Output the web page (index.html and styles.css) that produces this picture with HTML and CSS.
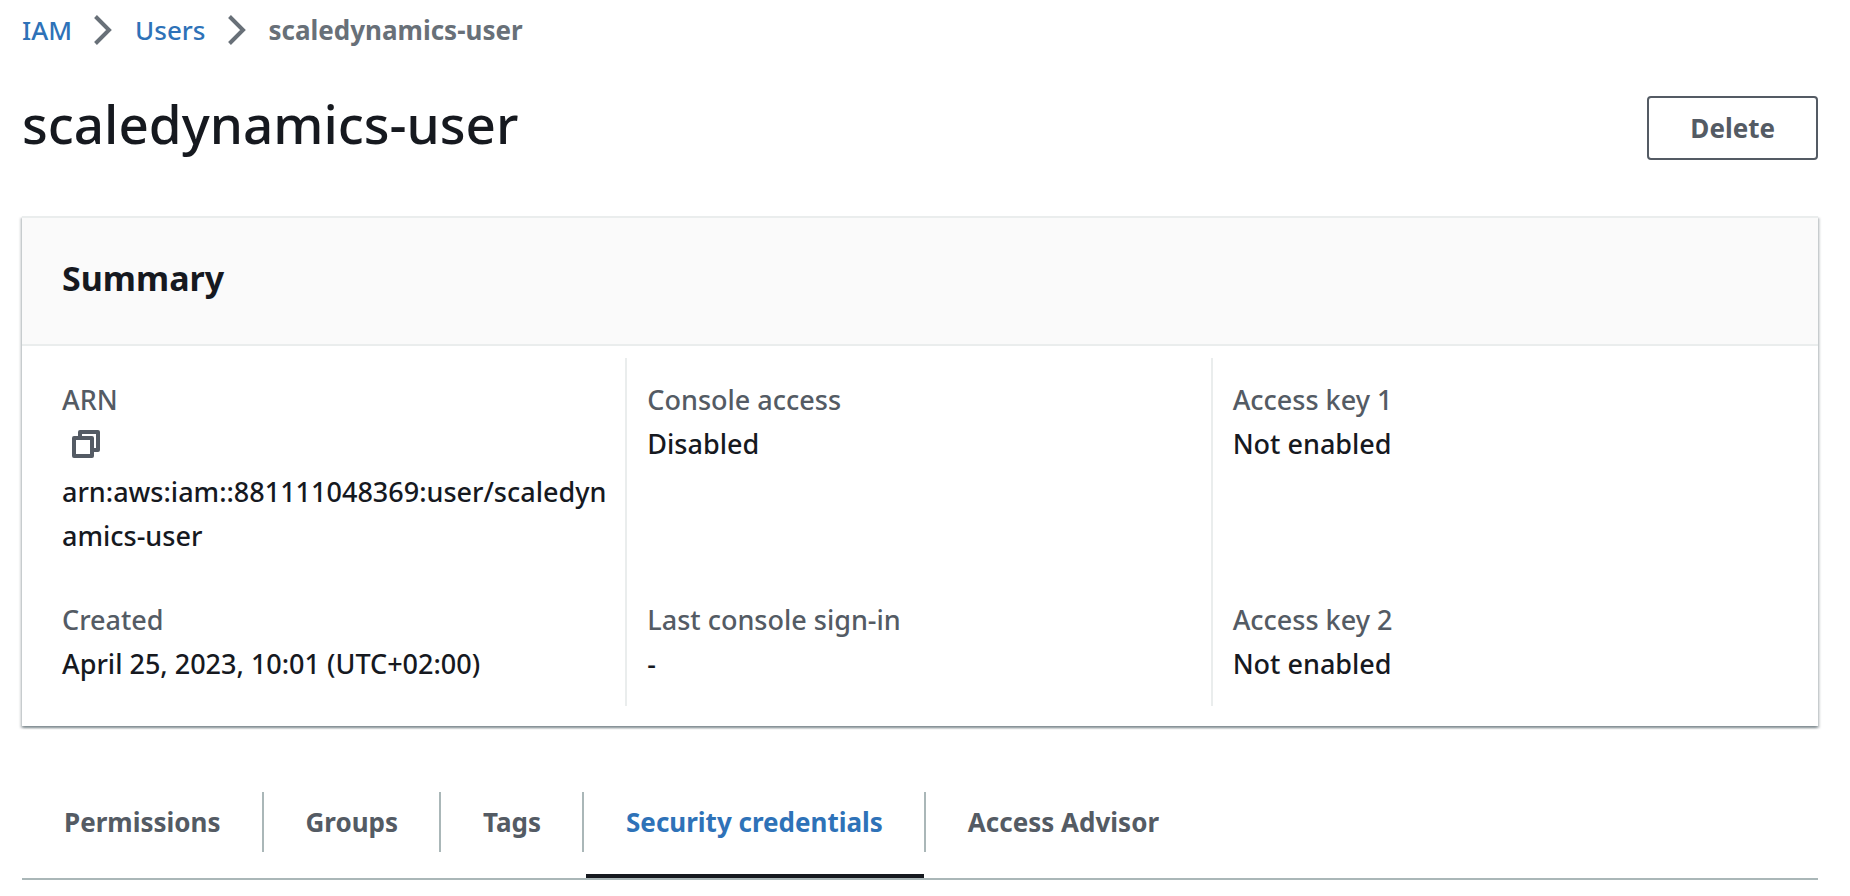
FILE: index.html
```
<!DOCTYPE html>
<html lang="en">
<head>
<meta charset="utf-8">
<meta name="viewport" content="width=device-width, initial-scale=1">
<title>scaledynamics-user | IAM</title>
<link rel="stylesheet" href="styles.css">
</head>
<body>
<main class="page">
  <nav class="breadcrumbs" aria-label="Breadcrumbs">
    <a class="crumb-link" href="#iam">IAM</a>
    <svg class="chevron" viewBox="0 0 19 30" aria-hidden="true"><path d="M1.5 1.5L15 15L1.5 28.5"/></svg>
    <a class="crumb-link" href="#users">Users</a>
    <svg class="chevron" viewBox="0 0 19 30" aria-hidden="true"><path d="M1.5 1.5L15 15L1.5 28.5"/></svg>
    <span class="crumb-current" aria-current="page">scaledynamics-user</span>
  </nav>

  <header class="title-row">
    <h1 class="title">scaledynamics-user</h1>
    <button class="button" type="button">Delete</button>
  </header>

  <section class="card" aria-labelledby="summary">
    <div class="card-header">
      <h2 class="card-title" id="summary">Summary</h2>
    </div>
    <div class="card-body">
      <dl class="column">
        <div class="field">
          <dt class="label">ARN</dt>
          <dd class="value value-long">
            <button class="copy" type="button" aria-label="Copy ARN">
              <svg class="copy-icon" viewBox="0 0 28 28" aria-hidden="true"><path d="M8 6V2H26V20H22"/><rect x="2" y="8" width="18" height="18"/></svg>
            </button>
            <span>arn:aws:iam::881111048369:user/scaledynamics-user</span>
          </dd>
        </div>
        <div class="field">
          <dt class="label">Created</dt>
          <dd class="value">April 25, 2023, 10:01 (UTC+02:00)</dd>
        </div>
      </dl>
      <dl class="column column-divided">
        <div class="field">
          <dt class="label">Console access</dt>
          <dd class="value">Disabled</dd>
        </div>
        <div class="field">
          <dt class="label">Last console sign-in</dt>
          <dd class="value">-</dd>
        </div>
      </dl>
      <dl class="column column-divided">
        <div class="field">
          <dt class="label">Access key 1</dt>
          <dd class="value">Not enabled</dd>
        </div>
        <div class="field">
          <dt class="label">Access key 2</dt>
          <dd class="value">Not enabled</dd>
        </div>
      </dl>
    </div>
  </section>

  <div class="tabs" role="tablist">
    <button class="tab" type="button" role="tab" aria-selected="false"><span class="tab-label">Permissions</span></button>
    <button class="tab" type="button" role="tab" aria-selected="false"><span class="tab-label">Groups</span></button>
    <button class="tab" type="button" role="tab" aria-selected="false"><span class="tab-label">Tags</span></button>
    <button class="tab tab-active" type="button" role="tab" aria-selected="true"><span class="tab-label">Security credentials</span></button>
    <button class="tab" type="button" role="tab" aria-selected="false"><span class="tab-label">Access Advisor</span></button>
  </div>
</main>
</body>
</html>
```
FILE: styles.css
```
:root {
  --text: #16191f;
  --label: #545b64;
  --muted: #687078;
  --link: #2e72b8;
  --line: #eaeded;
  --line-strong: #aab7b8;
}

* {
  box-sizing: border-box;
}

body {
  margin: 0;
  background: #fff;
  color: var(--text);
  font: 500 27px/44px "Noto Sans", "Open Sans", sans-serif;
}

button {
  margin: 0;
  border: 0;
  background: none;
  font: inherit;
  color: inherit;
  cursor: pointer;
}

.page {
  padding: 8px 32px 16px 22px;
}

/* Breadcrumbs */
.breadcrumbs {
  display: flex;
  align-items: center;
  gap: 22px;
  font-size: 26px;
}

.crumb-link {
  color: var(--link);
  text-decoration: none;
}

.crumb-current {
  color: var(--muted);
  font-weight: 700;
}

.chevron {
  width: 19px;
  height: 30px;
  fill: none;
  stroke: var(--muted);
  stroke-width: 4;
}

/* Page title */
.title-row {
  display: flex;
  align-items: flex-start;
  justify-content: space-between;
  margin: 44px 0 56px;
}

.title {
  margin: 0;
  font-size: 53px;
  font-weight: 500;
  line-height: 56px;
}

.button {
  padding: 0 41px;
  border: 2px solid var(--label);
  border-radius: 4px;
  background: #fff;
  color: var(--label);
  font-size: 26px;
  font-weight: 700;
  line-height: 60px;
}

/* Summary card */
.card {
  border-top: 2px solid var(--line);
  background: #fff;
  box-shadow:
    0 2px 2px rgba(0, 28, 36, 0.3),
    2px 2px 2px rgba(0, 28, 36, 0.15),
    -2px 2px 2px rgba(0, 28, 36, 0.15);
}

.card-header {
  padding: 38px 40px 44px;
  border-bottom: 2px solid var(--line);
  background: #fafafa;
}

.card-title {
  margin: 0;
  font-size: 34px;
  font-weight: 700;
  line-height: 44px;
}

.card-body {
  display: grid;
  grid-template-columns: repeat(3, minmax(0, 1fr));
  gap: 40px;
  padding: 12px 40px 20px;
}

.column {
  display: flex;
  flex-direction: column;
  justify-content: space-between;
  gap: 40px;
  margin: 0;
  padding: 20px 0;
}

.column-divided {
  margin-left: -22px;
  padding-left: 20px;
  border-left: 2px solid var(--line);
}

.label {
  color: var(--label);
}

.value {
  margin: 0;
}

.value-long {
  word-break: break-all;
}

.copy {
  display: block;
  margin-bottom: 4px;
  padding: 8px 10px;
}

.copy-icon {
  display: block;
  width: 28px;
  height: 28px;
  fill: none;
  stroke: var(--label);
  stroke-width: 4;
  stroke-linejoin: round;
}

/* Tabs */
.tabs {
  display: flex;
  margin-top: 66px;
  border-bottom: 2px solid var(--line-strong);
}

.tab {
  position: relative;
  padding: 0 0 26px;
  color: var(--label);
  font-size: 26px;
  font-weight: 700;
  line-height: 60px;
}

.tab-label {
  display: block;
  padding: 0 41px 0 42px;
  border-right: 2px solid var(--line-strong);
}

.tab:last-child .tab-label {
  border-right: 0;
}

.tab-active {
  color: var(--link);
}

.tab-active::after {
  content: "";
  position: absolute;
  right: 2px;
  bottom: 0;
  left: 2px;
  height: 4px;
  background: var(--text);
}
```
